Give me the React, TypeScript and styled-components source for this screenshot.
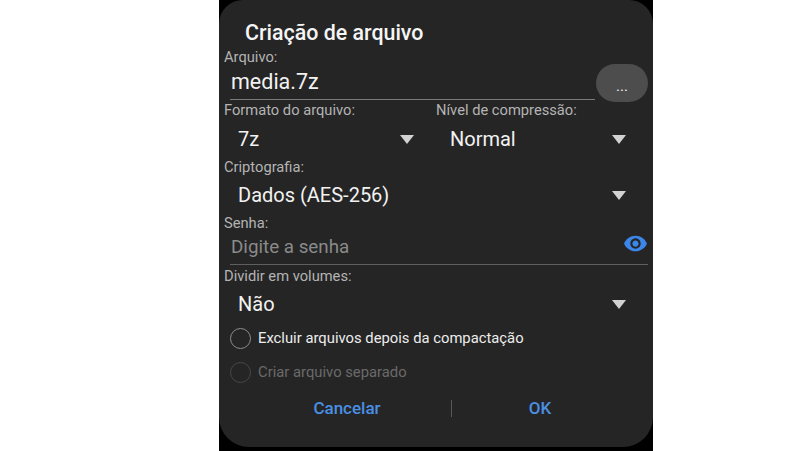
import styled, { createGlobalStyle } from "styled-components";
import { MdVisibility } from "react-icons/md";

const GlobalStyle = createGlobalStyle`
  html, body {
    margin: 0;
    padding: 0;
    background: #FFFFFF;
    font-family: Roboto, "Liberation Sans", sans-serif;
  }
`;

const App = () => {
  return (
    <Page>
      <GlobalStyle />
      <Phone>
        <Dialog>
          <Title>Criação de arquivo</Title>
          <Label>Arquivo:</Label>
          <FileRow>
            <FileInput>media.7z</FileInput>
            <BrowseButton>...</BrowseButton>
          </FileRow>
          <TwoColumns>
            <div>
              <Label>Formato do arquivo:</Label>
              <Select>
                <span>7z</span>
                <Arrow />
              </Select>
            </div>
            <div>
              <Label>Nível de compressão:</Label>
              <Select>
                <span>Normal</span>
                <Arrow />
              </Select>
            </div>
          </TwoColumns>
          <Label>Criptografia:</Label>
          <CipherSelect>
            <span>Dados (AES-256)</span>
            <Arrow />
          </CipherSelect>
          <Label>Senha:</Label>
          <PasswordRow>
            <Placeholder>Digite a senha</Placeholder>
            <EyeIcon size={25} color="#3B86E8" />
          </PasswordRow>
          <Label>Dividir em volumes:</Label>
          <VolumeSelect>
            <span>Não</span>
            <Arrow />
          </VolumeSelect>
          <CheckRow>
            <Radio />
            <CheckText>Excluir arquivos depois da compactação</CheckText>
          </CheckRow>
          <CheckRow>
            <Radio $disabled />
            <CheckText $disabled>Criar arquivo separado</CheckText>
          </CheckRow>
          <Actions>
            <Action>Cancelar</Action>
            <ActionDivider />
            <Action>OK</Action>
          </Actions>
        </Dialog>
      </Phone>
    </Page>
  );
};

export default App;

const Page = styled.div`
  width: 800px;
  height: 451px;
  overflow: hidden;
  padding-left: 219px;
  box-sizing: border-box;
`;
const Phone = styled.div`
  width: 434px;
  height: 451px;
  background: #000000;
`;
const Dialog = styled.div`
  height: 447px;
  box-sizing: border-box;
  padding: 20px 5px 0;
  background: #252525;
  border-radius: 24px 24px 30px 30px;
  color: #F2F2F2;
`;
const Title = styled.div`
  padding-left: 21px;
  margin-bottom: 2px;
  font-size: 21.4px;
  font-weight: 500;
  line-height: 26px;
  color: #F5F5F5;
`;
const Label = styled.div`
  font-size: 14.7px;
  line-height: 18px;
  color: #B4B4B4;
  white-space: nowrap;
`;
const FileRow = styled.div`
  display: flex;
  align-items: flex-start;
  margin-top: -1px;
  height: 35px;
`;
const FileInput = styled.div`
  width: 365px;
  height: 35px;
  margin-left: 6px;
  padding: 3px 0 0 1px;
  box-sizing: border-box;
  font-size: 21.5px;
  line-height: 27px;
  border-bottom: 1px solid #7A7A7A;
`;
const BrowseButton = styled.div`
  width: 52px;
  height: 38px;
  margin: -1px 0 0 1px;
  border-radius: 19px;
  background: #4D4D4D;
  font-size: 15px;
  line-height: 44px;
  text-align: center;
`;
const TwoColumns = styled.div`
  display: grid;
  grid-template-columns: 212px 212px;
  margin: 1px 0;
`;
const Select = styled.div`
  display: flex;
  align-items: center;
  justify-content: space-between;
  height: 38px;
  margin: 1px 0 -1px;
  padding: 0 22px 0 14px;
  font-size: 20px;
`;
const CipherSelect = styled(Select)`
  margin: 0;
`;
const VolumeSelect = styled(Select)`
  margin: 0 0 -2px;
`;
const Arrow = styled.i`
  width: 0;
  height: 0;
  border-left: 7.5px solid transparent;
  border-right: 7.5px solid transparent;
  border-top: 9px solid #D2D2D2;
`;
const PasswordRow = styled.div`
  display: flex;
  align-items: center;
  justify-content: space-between;
  height: 33px;
  padding: 0 0 3px 1px;
  margin: 0 0 2px 6px;
  width: 418px;
  border-bottom: 1px solid #5F5F5F;
  font-size: 18.8px;
  box-sizing: border-box;
`;
const Placeholder = styled.span`
  color: #8A8A8A;
`;
const EyeIcon = styled(MdVisibility)`
  margin-top: -6px;
`;
const CheckRow = styled.div`
  display: flex;
  align-items: center;
  gap: 7px;
  height: 34px;
  margin-left: 6px;
`;
const Radio = styled.i<{ $disabled?: boolean }>`
  width: 21px;
  height: 21px;
  box-sizing: border-box;
  border-radius: 50%;
  border: 1.5px solid ${(p) => (p.$disabled ? "#484848" : "#8E8E8E")};
`;
const CheckText = styled.span<{ $disabled?: boolean }>`
  font-size: 14.8px;
  color: ${(p) => (p.$disabled ? "#6A6A6A" : "#EDEDED")};
`;
const Actions = styled.div`
  display: grid;
  grid-template-columns: 208px 1px 176px;
  align-items: center;
  margin: 2px 0 0 19px;
  height: 34px;
`;
const Action = styled.div`
  text-align: center;
  font-size: 17px;
  font-weight: 500;
  color: #4A8FE3;
`;
const ActionDivider = styled.div`
  height: 17px;
  background: #585858;
`;
